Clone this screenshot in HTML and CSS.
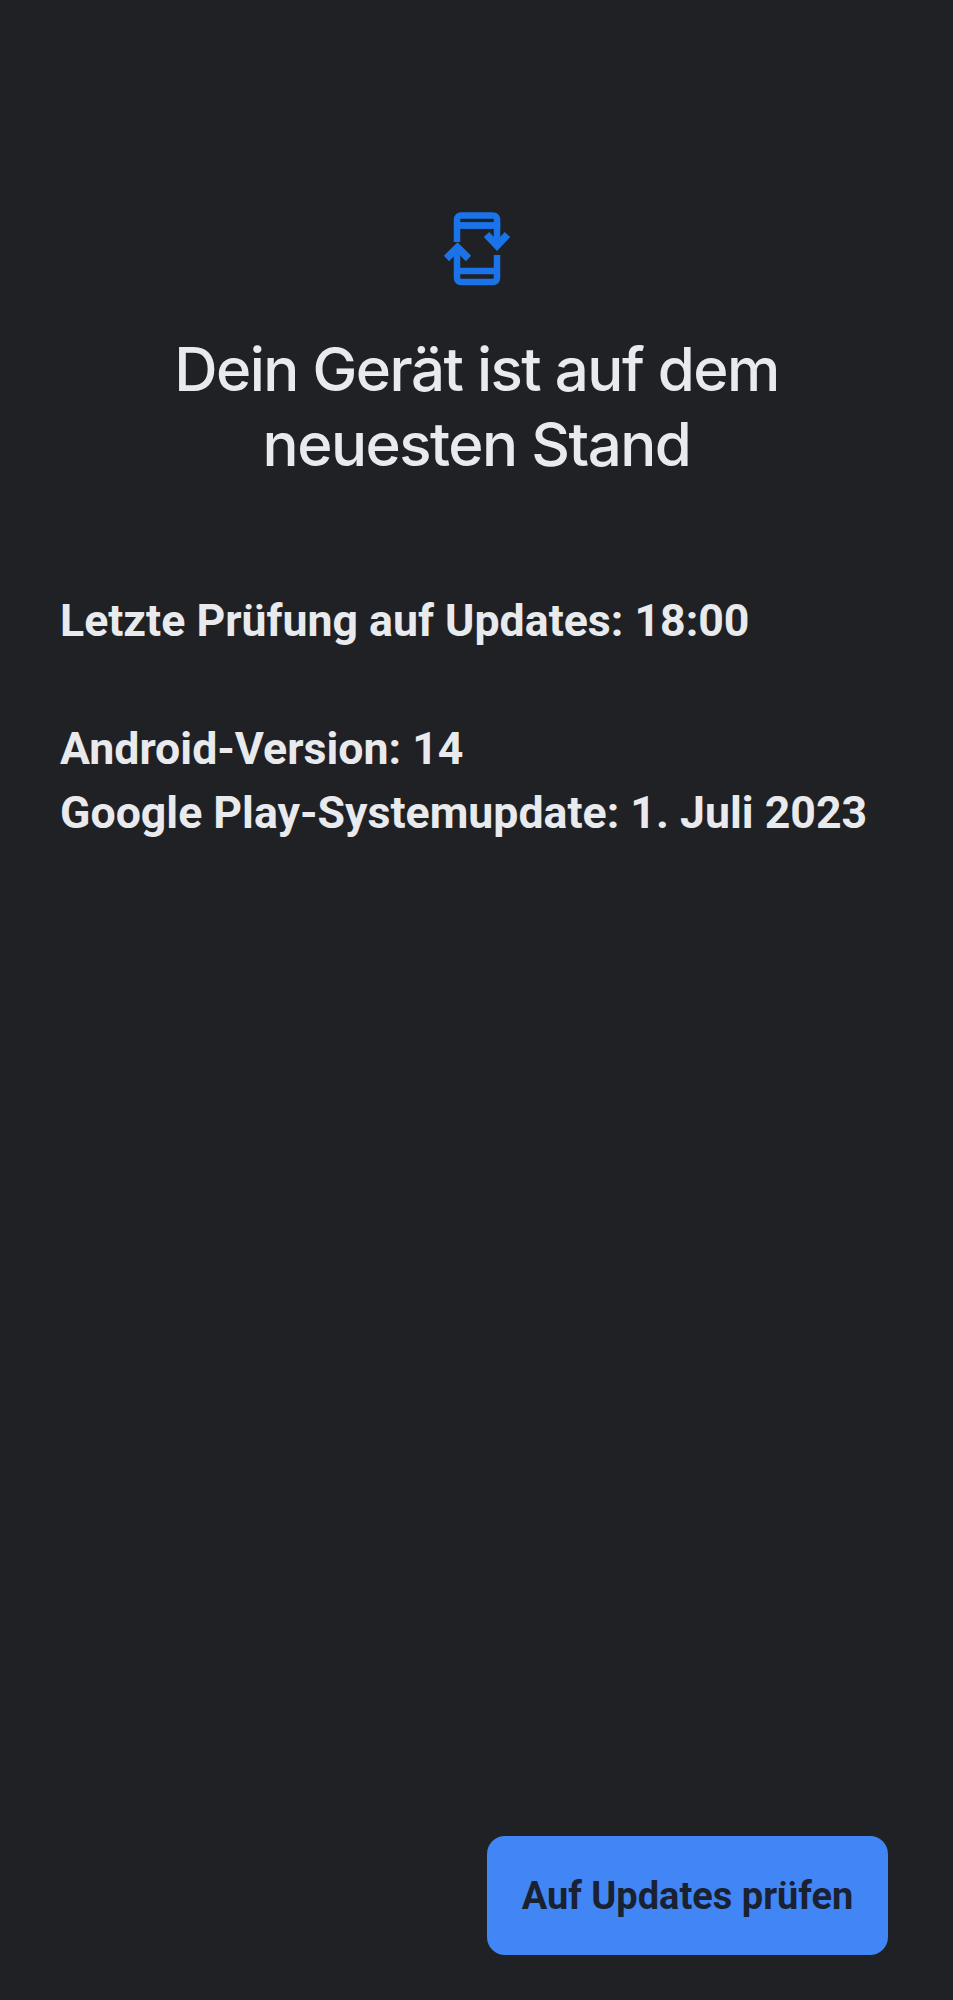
FILE: index.html
```html
<!DOCTYPE html>
<html lang="de">
<head>
  <meta charset="UTF-8" />
  <meta name="viewport" content="width=device-width, initial-scale=1.0"/>
  <title>Systemupdate</title>
  <link rel="stylesheet" href="styles.css">
</head>
<body>
  <main class="screen">
    <!-- Status icon -->
    <svg class="status-icon" viewBox="1.5 0 110 110" aria-hidden="true">
      <g class="icon-stroke">
        <path d="M36.5 52V29.5a4 4 0 0 1 4-4h32a4 4 0 0 1 4 4v6h-40" />
        <path d="M76.5 65v23a4 4 0 0 1-4 4h-32a4 4 0 0 1-4-4V60" />
        <path d="M36.5 81h40" />
        <path d="M36.5 35.5h40V55" />
      </g>
      <g class="icon-stroke icon-arrows">
        <path d="M66 44.5l10.5 11 10.5-11" />
        <path d="M26 68.5l11-11 11 11" />
      </g>
    </svg>

    <h1 class="title">Dein Gerät ist auf dem neuesten Stand</h1>

    <section class="details">
      <p class="line last-check">Letzte Prüfung auf Updates: 18:00</p>
      <p class="line">Android-Version: 14</p>
      <p class="line">Google Play-Systemupdate: 1. Juli 2023</p>
    </section>

    <div class="actions">
      <button class="check-button" type="button">Auf Updates prüfen</button>
    </div>
  </main>
</body>
</html>
```

FILE: styles.css
```css
* { box-sizing: border-box; }
html, body { margin: 0; height: 100%; }
body { background: #202124; color: #e8eaed; font-family: Roboto, "Liberation Sans", sans-serif; }

.screen {
  display: flex;
  flex-direction: column;
  height: 2000px;
  padding: 190px 0 45px;
}

.status-icon { display: block; width: 110px; height: 110px; margin: 0 auto; flex: none; }
.icon-stroke { fill: none; stroke: #1a73e8; stroke-width: 6.5; }
.icon-arrows { stroke-width: 7.5; }

.title {
  margin: 32px auto 0;
  width: 700px;
  font-family: Inter, "Open Sans", sans-serif;
  font-size: 60px;
  font-weight: 500;
  line-height: 75px;
  letter-spacing: -1.5px;
  text-align: center;
}

.details { margin-top: 107px; padding: 0 60px; }
.line {
  margin: 0;
  font-size: 44.65px;
  font-weight: 700;
  line-height: 64px;
}
.last-check { margin-bottom: 64px; }

.actions { margin-top: auto; display: flex; justify-content: flex-end; padding-right: 65px; }
.check-button {
  width: 401px;
  height: 119px;
  border: 0;
  border-radius: 18px;
  background: #4285f4;
  color: #1a2130;
  font-family: inherit;
  font-size: 38px;
  font-weight: 700;
}
```
